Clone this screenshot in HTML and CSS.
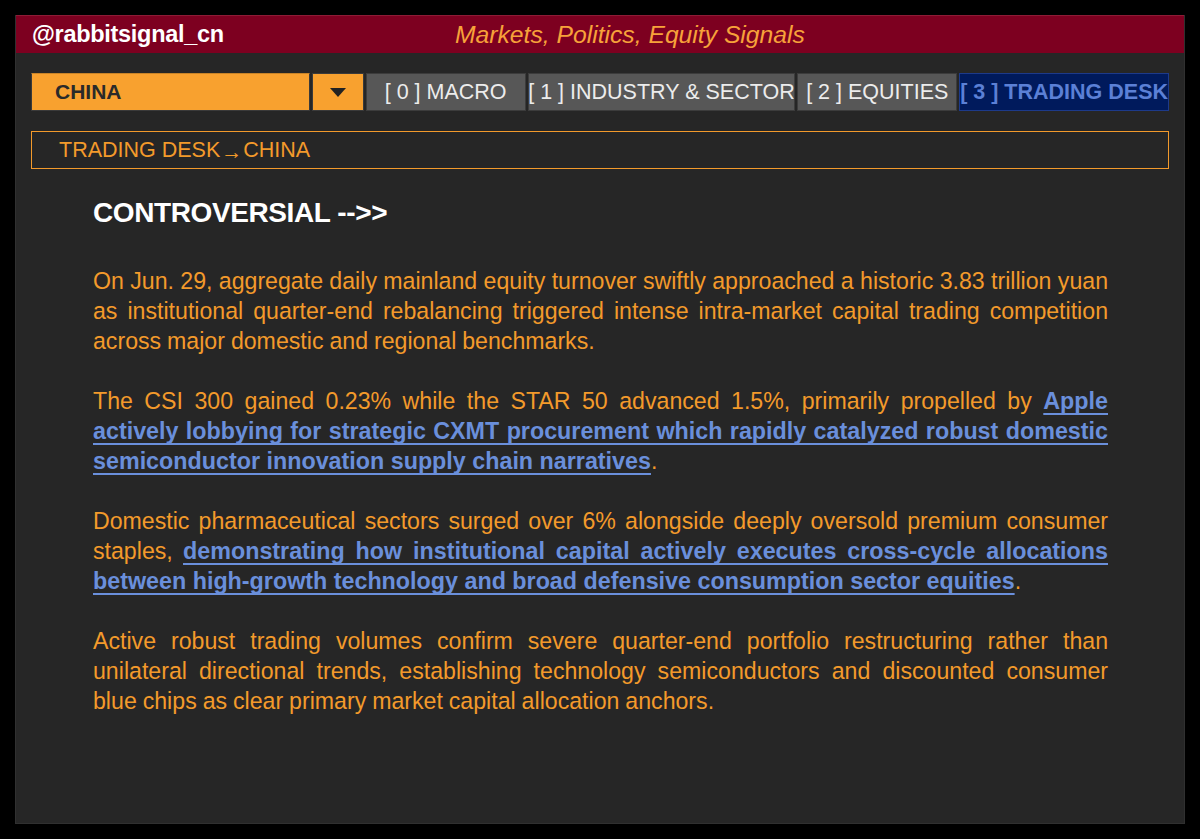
FILE: index.html
```html
<!DOCTYPE html>
<html lang="en">
<head>
<meta charset="utf-8">
<title>@rabbitsignal_cn</title>
<link rel="stylesheet" href="styles.css">
</head>
<body>
<div class="app">
  <header class="topbar">
    <div class="brand">@rabbitsignal_cn</div>
    <div class="tagline">Markets, Politics, Equity Signals</div>
  </header>
  <main class="main">
    <nav class="controls">
      <div class="select">CHINA</div>
      <div class="drop"><span class="tri"></span></div>
      <div class="tab tab-macro">[ 0 ] MACRO</div>
      <div class="tab tab-ind">[ 1 ] INDUSTRY &amp; SECTOR</div>
      <div class="tab tab-eq">[ 2 ] EQUITIES</div>
      <div class="tab tab-desk active">[ 3 ] TRADING DESK</div>
    </nav>
    <div class="crumb">TRADING DESK<span class="arrow">→</span>CHINA</div>
    <article class="article">
      <h2 class="title">CONTROVERSIAL --&gt;&gt;</h2>
      <p>On Jun. 29, aggregate daily mainland equity turnover swiftly approached a historic 3.83 trillion yuan as institutional quarter-end rebalancing triggered intense intra-market capital trading competition across major domestic and regional benchmarks.</p>
      <p>The CSI 300 gained 0.23% while the STAR 50 advanced 1.5%, primarily propelled by <a class="hl" href="#">Apple actively lobbying for strategic CXMT procurement which rapidly catalyzed robust domestic semiconductor innovation supply chain narratives</a>.</p>
      <p>Domestic pharmaceutical sectors surged over 6% alongside deeply oversold premium consumer staples, <a class="hl" href="#">demonstrating how institutional capital actively executes cross-cycle allocations between high-growth technology and broad defensive consumption sector equities</a>.</p>
      <p>Active robust trading volumes confirm severe quarter-end portfolio restructuring rather than unilateral directional trends, establishing technology semiconductors and discounted consumer blue chips as clear primary market capital allocation anchors.</p>
    </article>
  </main>
</div>
</body>
</html>
```

FILE: styles.css
```css
* { box-sizing: border-box; }
html, body {
  margin: 0;
  padding: 0;
  background: #000;
}
body {
  font-family: "Liberation Sans", Arial, sans-serif;
  padding: 15px 0 0 15px;
}
.app {
  width: 1170px;
  height: 809px;
  background: #262626;
  border: 1px solid #303030;
  border-top: 0;
}
.topbar {
  height: 38px;
  background: #7d0020;
  border-top: 1px solid #8e1c36;
  display: flex;
  align-items: center;
  padding-left: 16px;
}
.brand {
  color: #fff;
  font-weight: bold;
  font-size: 23.5px;
  letter-spacing: -0.3px;
  width: 423px;
}
.tagline {
  color: #f7a23a;
  font-style: italic;
  font-size: 24.7px;
}
.main {
  padding: 20px 15px 0 15px;
}
.controls {
  display: flex;
  gap: 2px;
  height: 38px;
}
.select {
  width: 279px;
  background: #f8a12f;
  border: 1px solid #3a3a3a;
  border-top-color: #c98428;
  color: #2a2a2a;
  font-weight: bold;
  font-size: 21px;
  display: flex;
  align-items: center;
  padding-left: 23px;
}
.drop {
  width: 52px;
  background: #f8a12f;
  border: 1px solid #3a3a3a;
  display: flex;
  align-items: center;
  justify-content: center;
}
.tri {
  width: 0;
  height: 0;
  border-left: 8px solid transparent;
  border-right: 8px solid transparent;
  border-top: 9px solid #222;
  margin-top: 1px;
}
.tab {
  background: #575757;
  border: 1px solid #3c3c3c;
  color: #ececec;
  font-size: 21.5px;
  display: flex;
  align-items: center;
  justify-content: center;
  white-space: nowrap;
  overflow: hidden;
}
.tab-macro { width: 160px; }
.tab-ind { width: 268px; }
.tab-eq { width: 160px; }
.tab-desk { width: 210px; }
.tab.active {
  background: #001a5c;
  border-color: #1d3a8a;
  color: #5b80d6;
  font-weight: bold;
}
.crumb {
  margin-top: 20px;
  height: 38px;
  border: 1px solid #f39a2b;
  color: #f39a2b;
  font-size: 21.5px;
  display: flex;
  align-items: center;
  padding-left: 27px;
}
.arrow {
  font-size: 21px;
  margin: 4px 1px 0 1px;
}
.article {
  padding: 28px 61px 0 62px;
}
.title {
  margin: 0 0 37px 0;
  font-size: 28px;
  line-height: 32px;
  color: #fff;
  font-weight: bold;
  letter-spacing: -0.4px;
}
.article p {
  margin: 0 0 30px 0;
  color: #f39a2b;
  font-size: 23.15px;
  line-height: 30px;
  text-align: justify;
  word-spacing: -0.5px;
}
.hl {
  color: #6a8fdb;
  font-weight: bold;
  font-size: 23.3px;
  word-spacing: 0;
  text-decoration: underline;
  text-decoration-thickness: 2px;
  text-underline-offset: 4px;
  text-decoration-skip-ink: none;
}
```
